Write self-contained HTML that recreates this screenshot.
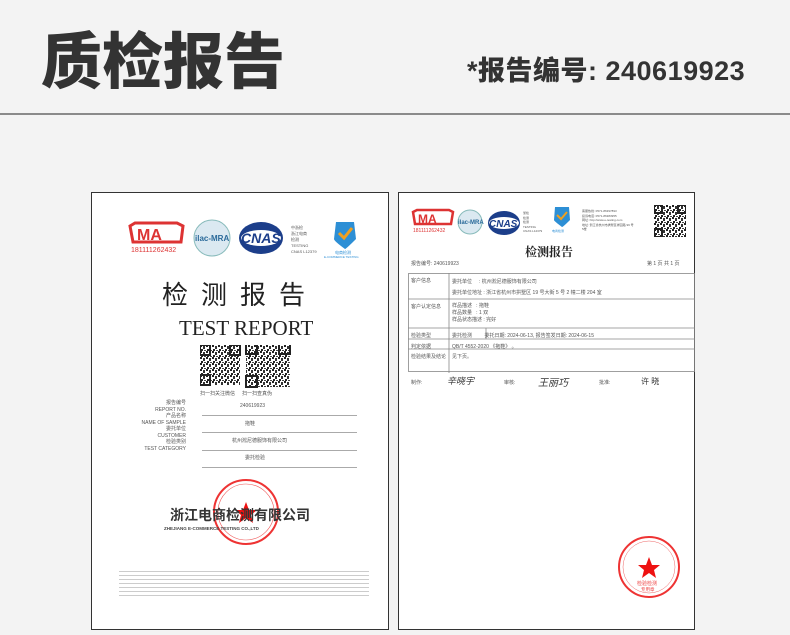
<!DOCTYPE html>
<html><head><meta charset="utf-8"><style>
*{margin:0;padding:0;box-sizing:border-box}
body{width:790px;height:635px;background:#f3f3f3;position:relative;overflow:hidden;font-family:"Liberation Sans","Noto Sans CJK SC",sans-serif;color:#333}
.a{position:absolute;white-space:nowrap}
.card{position:absolute;background:#fff;border:1.5px solid #333}
.s{font-family:"Liberation Serif","Noto Serif CJK SC",serif}
.t{color:#555;font-size:5px}
.ln{position:absolute;height:1px;background:#aaa}
</style></head><body>
<div class="a" style="left:41px;top:12px;font-size:61px;font-weight:900;letter-spacing:0px;color:#333">质检报告</div>
<div class="a" style="left:467px;top:49px;font-size:27px;font-weight:900;letter-spacing:0.5px;color:#333">*报告编号: 240619923</div>
<div style="position:absolute;left:0;top:113px;width:790px;height:2px;background:#8a8a8a"></div>

<svg width="0" height="0" style="position:absolute"><defs>
<pattern id="qr" width="6" height="6" patternUnits="userSpaceOnUse"><rect width="6" height="6" fill="#fff"/><rect x="0" y="0" width="2" height="2" fill="#222"/><rect x="3" y="1" width="2" height="3" fill="#333"/><rect x="1" y="4" width="2" height="2" fill="#222"/><rect x="4" y="5" width="2" height="1" fill="#444"/></pattern>
</defs></svg>

<!-- left card -->
<div class="card" style="left:91px;top:192px;width:298px;height:438px">
 <svg class="a" style="left:35px;top:27px" width="60" height="36"><path d="M3 6 L8 3 L50 3 L56 6 L54 22 L6 22 Z" fill="none" stroke="#d33" stroke-width="3"/><text x="10" y="20" font-size="16" font-weight="bold" fill="#d33" font-family="Liberation Sans">MA</text><text x="4" y="32" font-size="7" fill="#d33" font-family="Liberation Sans">181111262432</text></svg>
 <svg class="a" style="left:100px;top:25px" width="40" height="40"><circle cx="20" cy="20" r="18" fill="#dbe9f1" stroke="#8bb" /><text x="3" y="23" font-size="8" fill="#2a6a9a" font-family="Liberation Sans" font-weight="bold">ilac-MRA</text></svg>
 <svg class="a" style="left:146px;top:27px" width="46" height="36"><ellipse cx="23" cy="18" rx="22" ry="16" fill="#1c3e8a"/><ellipse cx="23" cy="18" rx="20" ry="8" fill="#fff"/><text x="3" y="23" font-size="14" font-weight="bold" font-style="italic" fill="#1c3e8a" font-family="Liberation Sans">CNAS</text></svg>
 <div class="a t" style="left:199px;top:32px;line-height:6px;font-size:4px">中浙检<br>浙江电商<br>检测<br>TESTING<br>CNAS L12379</div>
 <svg class="a" style="left:232px;top:26px" width="45" height="40"><path d="M12 3 L30 3 L32 20 Q22 30 21 30 Q10 22 10 20 Z" fill="#2d8fd5"/><path d="M15 14 L20 19 L28 9" stroke="#f0a020" stroke-width="3" fill="none"/><text x="11" y="35" font-size="4" fill="#2d8fd5">电商检测</text><text x="0" y="39" font-size="3" fill="#2d8fd5">E-COMMERCE TESTING</text></svg>
 <div class="a" style="left:70px;top:82px;font-size:26px;letter-spacing:13px;color:#222">检测报告</div>
 <div class="a s" style="left:87px;top:123px;font-size:21px;color:#222">TEST REPORT</div>
 <svg class="a" style="left:108px;top:152px" width="100" height="45"><rect width="40" height="40" fill="url(#qr)"/><rect x="0" y="0" width="10" height="10" fill="none" stroke="#222" stroke-width="2"/><rect x="30" y="0" width="10" height="10" fill="none" stroke="#222" stroke-width="2"/><rect x="0" y="30" width="10" height="10" fill="none" stroke="#222" stroke-width="2"/><rect x="46" y="-2" width="44" height="44" fill="url(#qr)"/><rect x="46" y="-2" width="11" height="11" fill="none" stroke="#222" stroke-width="2"/><rect x="79" y="-2" width="11" height="11" fill="none" stroke="#222" stroke-width="2"/><rect x="46" y="31" width="11" height="11" fill="none" stroke="#222" stroke-width="2"/></svg>
 <div class="a t" style="left:108px;top:197px">扫一扫关注微信 &nbsp;&nbsp;&nbsp; 扫一扫查真伪</div>
 <div class="a t" style="left:24px;top:207px;width:70px;text-align:right;line-height:6.5px">报告编号<br>REPORT NO.<br>产品名称<br>NAME OF SAMPLE<br>委托单位<br>CUSTOMER<br>检验类别<br>TEST CATEGORY</div>
 <div class="a t" style="left:148px;top:210px">240619923</div>
 <div class="ln" style="left:110px;top:222px;width:155px"></div>
 <div class="a t" style="left:153px;top:227px">拖鞋</div>
 <div class="ln" style="left:110px;top:239px;width:155px"></div>
 <div class="a t" style="left:140px;top:244px">杭州淞尼德服饰有限公司</div>
 <div class="ln" style="left:110px;top:257px;width:155px"></div>
 <div class="a t" style="left:153px;top:261px">委托检验</div>
 <div class="ln" style="left:110px;top:274px;width:155px"></div>
 <svg class="a" style="left:119px;top:284px" width="70" height="70"><circle cx="35" cy="35" r="32" fill="none" stroke="#e33" stroke-width="2"/><circle cx="35" cy="35" r="28" fill="none" stroke="#e55" stroke-width="0.6"/><path d="M35 25 L38 33 L46 33 L40 38 L42 46 L35 41 L28 46 L30 38 L24 33 L32 33 Z" fill="#e11"/></svg>
 <div class="a" style="left:78px;top:312px;font-size:14px;font-weight:bold;color:#333">浙江电商检测有限公司</div>
 <div class="a" style="left:72px;top:333px;font-size:4.5px;font-weight:bold;color:#444">ZHEJIANG E-COMMERCE TESTING CO.,LTD</div>
 <div style="position:absolute;left:27px;top:375px;width:250px;height:30px;background:repeating-linear-gradient(#fff 0 3px,#ccc 3px 4px)"></div>
</div>

<!-- right card -->
<div class="card" style="left:398px;top:192px;width:297px;height:438px">
 <svg class="a" style="left:12px;top:15px" width="44" height="28"><path d="M2 4 L6 2 L38 2 L42 4 L40 16 L4 16 Z" fill="none" stroke="#d33" stroke-width="2.5"/><text x="7" y="15" font-size="12" font-weight="bold" fill="#d33" font-family="Liberation Sans">MA</text><text x="2" y="24" font-size="5" fill="#d33">181111262432</text></svg>
 <svg class="a" style="left:58px;top:16px" width="28" height="28"><circle cx="13" cy="13" r="12" fill="#dbe9f1" stroke="#8bb"/><text x="1" y="15" font-size="6" fill="#2a6a9a" font-weight="bold">ilac-MRA</text></svg>
 <svg class="a" style="left:88px;top:17px" width="34" height="26"><ellipse cx="17" cy="13" rx="16" ry="12" fill="#1c3e8a"/><ellipse cx="17" cy="13" rx="15" ry="6" fill="#fff"/><text x="2" y="17" font-size="10" font-weight="bold" font-style="italic" fill="#1c3e8a">CNAS</text></svg>
 <div class="a t" style="left:124px;top:18px;font-size:3px;line-height:4.5px">浙检<br>检测<br>检测<br>TESTING<br>CNAS L12379</div>
 <svg class="a" style="left:148px;top:12px" width="30" height="32"><path d="M8 2 L22 2 L23 15 Q16 22 15 22 Q7 16 7 15 Z" fill="#2d8fd5"/><path d="M10 10 L14 14 L20 7" stroke="#f0a020" stroke-width="2" fill="none"/><text x="5" y="27" font-size="3" fill="#2d8fd5">电商检测</text></svg>
 <div class="a t" style="left:183px;top:16px;font-size:3px;line-height:4.5px">客服热线: 0571-86397893<br>投诉电话: 0571-86383955<br>网址: http://www.e-testing.com<br>地址: 浙江省杭州市拱墅区祥园路 99 号<br>5楼</div>
 <svg class="a" style="left:255px;top:12px" width="32" height="32"><rect width="32" height="32" fill="url(#qr)"/><rect x="0" y="0" width="8" height="8" fill="none" stroke="#222" stroke-width="2"/><rect x="24" y="0" width="8" height="8" fill="none" stroke="#222" stroke-width="2"/><rect x="0" y="24" width="8" height="8" fill="none" stroke="#222" stroke-width="2"/></svg>
 <div class="a s" style="left:126px;top:50px;font-size:12px;font-weight:bold;color:#222">检测报告</div>
 <div class="a t" style="left:12px;top:67px">报告编号: 240619923</div>
 <div class="a t" style="left:248px;top:67px">第 1 页 共 1 页</div>
 <svg class="a" style="left:9px;top:80px" width="287" height="100"><g fill="none" stroke="#888" stroke-width="0.8"><rect x="0.5" y="0.5" width="286" height="98"/><line x1="0" y1="26" x2="287" y2="26"/><line x1="0" y1="55" x2="287" y2="55"/><line x1="0" y1="66" x2="287" y2="66"/><line x1="0" y1="76" x2="287" y2="76"/><line x1="41" y1="0" x2="41" y2="100"/><line x1="78" y1="55" x2="78" y2="66"/></g></svg>
 <div class="a t" style="left:12px;top:84px">客户信息</div>
 <div class="a t" style="left:12px;top:110px">客户认定信息</div>
 <div class="a t" style="left:12px;top:139px">检验类型</div>
 <div class="a t" style="left:12px;top:150px">判定依据</div>
 <div class="a t" style="left:12px;top:160px">检验结果及结论</div>
 <div class="a t" style="left:53px;top:84px;line-height:11px">委托单位 &nbsp;&nbsp;&nbsp;&nbsp;: 杭州淞尼德服饰有限公司<br>委托单位地址 : 浙江省杭州市拱墅区 19 号大街 5 号 2 幢二楼 204 室</div>
 <div class="a t" style="left:53px;top:110px;line-height:7px">样品描述 &nbsp;&nbsp;: 拖鞋<br>样品数量 &nbsp;&nbsp;: 1 双<br>样品状态描述 : 完好</div>
 <div class="a t" style="left:53px;top:139px">委托检测 &nbsp;&nbsp;&nbsp;&nbsp;&nbsp;&nbsp;&nbsp; 委托日期: 2024-06-13, 报告签发日期: 2024-06-15</div>
 <div class="a t" style="left:53px;top:150px">QB/T 4552-2020 《拖鞋》 。</div>
 <div class="a t" style="left:53px;top:160px">见下页。</div>
 <div class="a t" style="left:12px;top:186px">制作:</div>
 <div class="a" style="left:48px;top:181px;font-size:9px;font-style:italic;color:#333">辛晓宇</div>
 <div class="a t" style="left:105px;top:186px">审核:</div>
 <div class="a" style="left:139px;top:181px;font-size:10px;font-style:italic;color:#333">王丽巧</div>
 <div class="a t" style="left:200px;top:186px">批准:</div>
 <div class="a" style="left:242px;top:183px;font-size:8px;color:#333">许 晓</div>
 <svg class="a" style="left:218px;top:342px" width="64" height="64"><circle cx="32" cy="32" r="30" fill="none" stroke="#e33" stroke-width="2"/><circle cx="32" cy="32" r="26" fill="none" stroke="#e66" stroke-width="0.5"/><path d="M32 22 L35 30 L43 30 L37 35 L39 43 L32 38 L25 43 L27 35 L21 30 L29 30 Z" fill="#e11"/><text x="20" y="50" font-size="5" fill="#e44">检验检测</text><text x="24" y="56" font-size="4.5" fill="#e44">专用章</text></svg>
</div>
</body></html>
